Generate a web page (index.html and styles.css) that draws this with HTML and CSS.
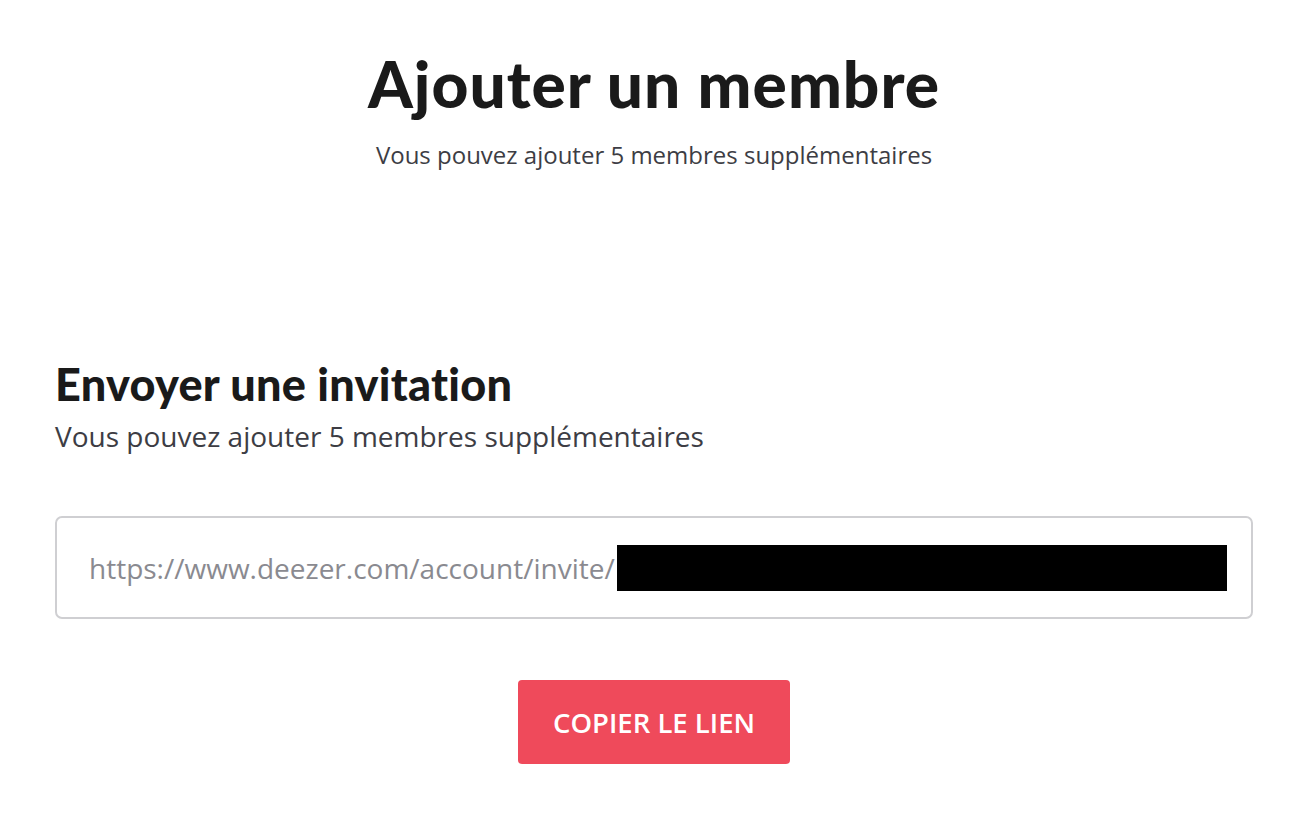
FILE: index.html
```html
<!DOCTYPE html>
<html lang="fr">
<head>
<meta charset="utf-8">
<title>Ajouter un membre</title>
<link rel="stylesheet" href="styles.css">
</head>
<body>
<main class="page">
  <header class="intro">
    <h1 class="title">Ajouter un membre</h1>
    <p class="subtitle">Vous pouvez ajouter 5 membres supplémentaires</p>
  </header>
  <section class="invite">
    <h2 class="invite-title">Envoyer une invitation</h2>
    <p class="invite-text">Vous pouvez ajouter 5 membres supplémentaires</p>
    <div class="link-field">
      <span class="link-text">https://www.deezer.com/account/invite/</span><span class="redacted"></span>
    </div>
    <div class="actions">
      <button class="copy-btn" type="button">COPIER LE LIEN</button>
    </div>
  </section>
</main>
</body>
</html>
```
FILE: styles.css
```css
* { box-sizing: border-box; }
html, body { margin: 0; padding: 0; background: #fff; }
body { font-family: "Open Sans", "Liberation Sans", sans-serif; color: #1d1d1f; }
.page { width: 1306px; padding: 0 53px 0 55px; }
.intro { text-align: center; padding-top: 46px; }
.title {
  margin: 0;
  font-family: "Lato", "Inter", sans-serif;
  font-weight: 900;
  font-size: 64px;
  line-height: 76px;
  color: #1a1a1a;
  letter-spacing: 1px;
}
.subtitle { margin: 18px 0 0; font-size: 24px; line-height: 30px; color: #3d3d44; }
.invite { padding-top: 188px; }
.invite-title {
  margin: 0;
  font-family: "Lato", "Inter", sans-serif;
  font-weight: 900;
  font-size: 45px;
  line-height: 52px;
  color: #1a1a1a;
  letter-spacing: 0.3px;
}
.invite-text { margin: 9px 0 0; font-size: 28px; line-height: 34px; color: #3d3d44; }
.link-field {
  margin-top: 63px;
  height: 103px;
  border: 2px solid #cfcfd2;
  border-radius: 7px;
  display: flex;
  align-items: center;
  padding: 0 24px 0 32px;
}
.link-text { font-size: 28px; color: #8a8a90; white-space: nowrap; }
.redacted { flex: 1; height: 46px; background: #000; margin-left: 2px; }
.actions { display: flex; justify-content: center; margin-top: 61px; }
.copy-btn {
  width: 272px;
  height: 84px;
  border: 0;
  border-radius: 4px;
  background: #ef4a5b;
  color: #fff;
  font-family: "Open Sans", sans-serif;
  font-weight: 600;
  font-size: 27.5px;
  padding: 0;
}
```
